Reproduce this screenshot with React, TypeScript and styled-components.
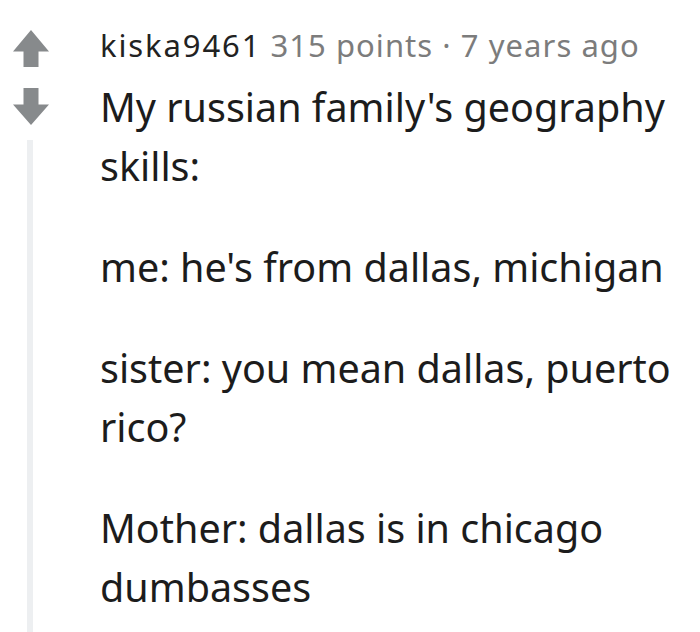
import React from "react";
import styled, { createGlobalStyle } from "styled-components";

const Global = createGlobalStyle`
  html, body { margin: 0; padding: 0; background: #ffffff; }
  body { font-family: "Noto Sans", "Open Sans", sans-serif; }
`;

const Page = styled.div`
  display: flex;
  width: 700px;
  height: 632px;
  overflow: hidden;
  background: #ffffff;
`;

const VoteColumn = styled.div`
  display: flex;
  flex-direction: column;
  align-items: center;
  width: 62px;
  padding-top: 30px;
  box-sizing: border-box;
`;

const Arrow = styled.svg<{ $gap?: number }>`
  display: block;
  width: 36px;
  height: 37px;
  margin-bottom: ${(p) => p.$gap ?? 0}px;
`;

const ThreadLine = styled.div`
  flex: 1;
  width: 6px;
  margin-top: 15px;
  margin-left: -2px;
  background: #edeff1;
`;

const Content = styled.div`
  flex: 1;
  padding-left: 38px;
  padding-top: 25px;
  padding-right: 10px;
`;

const Header = styled.div`
  font-size: 31px;
  line-height: 40px;
  letter-spacing: 1.05px;
  color: #7c7c7c;
  white-space: nowrap;
`;

const Author = styled.span`
  color: #222222;
  letter-spacing: 1.9px;
`;

const Body = styled.div`
  margin-top: 13px;
  font-size: 39.5px;
  line-height: 59px;
  color: #1c1c1c;
`;

const Para = styled.p`
  margin: 0 0 42px 0;
`;

const UpArrow = () => (
  <Arrow viewBox="0 0 36 37" $gap={21}>
    <path d="M18 0 L36 21.5 L25.5 21.5 L25.5 37 L10.5 37 L10.5 21.5 L0 21.5 Z" fill="#878a8c" />
  </Arrow>
);

const DownArrow = () => (
  <Arrow viewBox="0 0 36 37">
    <path d="M18 37 L36 16.5 L25.5 16.5 L25.5 0 L10.5 0 L10.5 16.5 L0 16.5 Z" fill="#878a8c" />
  </Arrow>
);

export default function App() {
  return (
    <Page>
      <Global />
      <VoteColumn>
        <UpArrow />
        <DownArrow />
        <ThreadLine />
      </VoteColumn>
      <Content>
        <Header>
          <Author>kiska9461</Author> 315 points · 7 years ago
        </Header>
        <Body>
          <Para>My russian family's geography skills:</Para>
          <Para>me: he's from dallas, michigan</Para>
          <Para>sister: you mean dallas, puerto rico?</Para>
          <Para>Mother: dallas is in chicago dumbasses</Para>
        </Body>
      </Content>
    </Page>
  );
}
